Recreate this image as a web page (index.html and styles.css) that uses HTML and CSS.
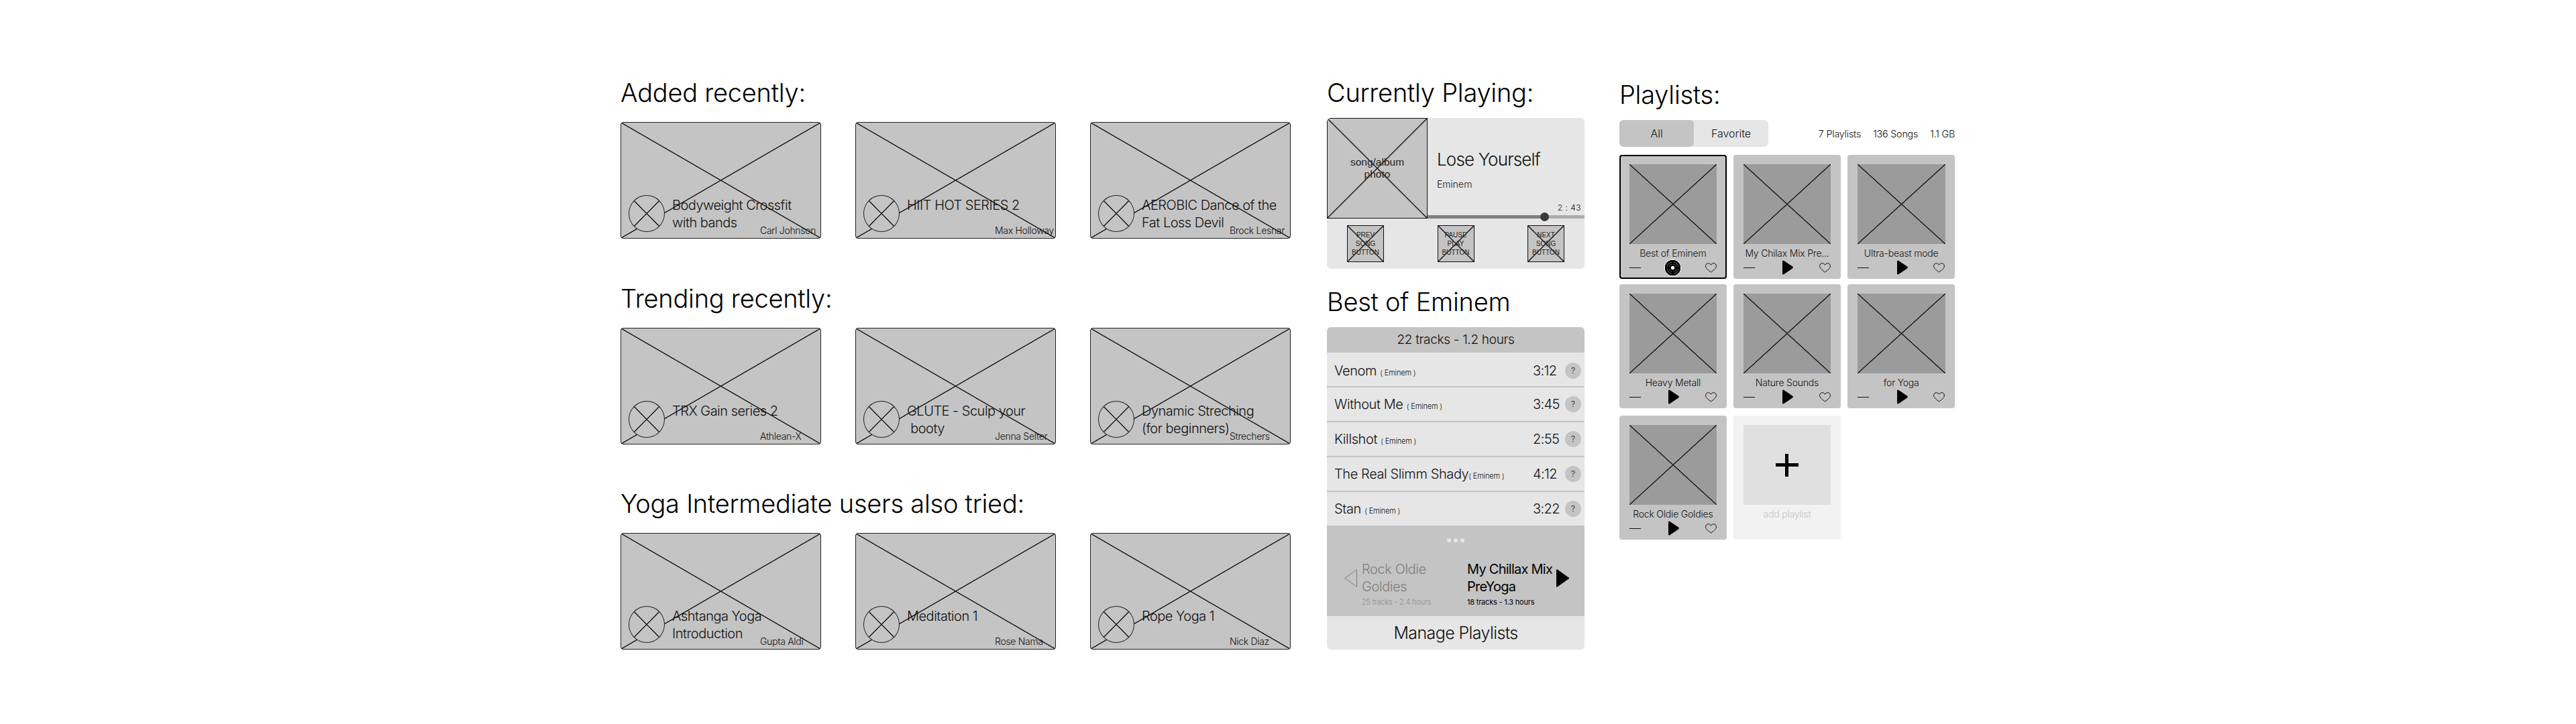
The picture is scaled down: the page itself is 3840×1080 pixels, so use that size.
FILE: index.html
```html
<!DOCTYPE html>
<html lang="en">
<head>
  <meta charset="UTF-8">
  <title>Workout Music</title>
  <link rel="stylesheet" href="styles.css">
</head>
<body>
  <svg class="sprite">
    <symbol id="play" viewBox="0 0 16 22"><path d="M2 .8 15 9.6 a1.6 1.6 0 0 1 0 2.8 L2 21.2 a1.3 1.3 0 0 1-2-1 V1.8 a1.3 1.3 0 0 1 2-1z" fill="#000"/></symbol>
    <symbol id="heart" viewBox="0 0 17 15"><path d="M8.5 14 C5 11.2 .6 8.6 .6 4.8 .6 2.4 2.4 .7 4.5 .7 6.2 .7 7.7 1.7 8.5 3.2 9.3 1.7 10.8 .7 12.5 .7 14.6 .7 16.4 2.4 16.4 4.8 16.4 8.6 12 11.2 8.5 14z" fill="none" stroke="#111" stroke-width="1"/></symbol>
  </svg>

  <main class="page">
    <div class="col-videos">
      <h2 class="heading">Added recently:</h2>
      <div class="video-row">
        <div class="video cross">
          <div class="avatar cross"></div>
          <div class="video-title">Bodyweight Crossfit<br>with bands</div>
          <div class="video-author">Carl Johnson</div>
        </div>
        <div class="video cross">
          <div class="avatar cross"></div>
          <div class="video-title">HIIT HOT SERIES 2</div>
          <div class="video-author">Max Holloway</div>
        </div>
        <div class="video cross">
          <div class="avatar cross"></div>
          <div class="video-title">AEROBIC Dance of the<br>Fat Loss Devil</div>
          <div class="video-author">Brock Lesnar</div>
        </div>
      </div>

      <h2 class="heading">Trending recently:</h2>
      <div class="video-row">
        <div class="video cross">
          <div class="avatar cross"></div>
          <div class="video-title">TRX Gain series 2</div>
          <div class="video-author">Athlean-X</div>
        </div>
        <div class="video cross">
          <div class="avatar cross"></div>
          <div class="video-title">GLUTE - Sculp your<br>&nbsp;booty</div>
          <div class="video-author">Jenna Selter</div>
        </div>
        <div class="video cross">
          <div class="avatar cross"></div>
          <div class="video-title">Dynamic Streching<br>(for beginners)</div>
          <div class="video-author">Strechers</div>
        </div>
      </div>

      <h2 class="heading">Yoga Intermediate users also tried:</h2>
      <div class="video-row">
        <div class="video cross">
          <div class="avatar cross"></div>
          <div class="video-title">Ashtanga Yoga<br>Introduction</div>
          <div class="video-author">Gupta Aldi</div>
        </div>
        <div class="video cross">
          <div class="avatar cross"></div>
          <div class="video-title">Meditation 1</div>
          <div class="video-author">Rose Nama</div>
        </div>
        <div class="video cross">
          <div class="avatar cross"></div>
          <div class="video-title">Rope Yoga 1</div>
          <div class="video-author">Nick Diaz</div>
        </div>
      </div>
    </div>

    <div class="col-player">
      <h2 class="heading">Currently Playing:</h2>
      <section class="player">
        <div class="now">
          <div class="album cross">song/album<br>photo</div>
          <div class="now-info">
            <div class="now-title">Lose Yourself</div>
            <div class="now-artist">Eminem</div>
            <div class="now-time">2 : 43</div>
            <div class="progress"><div class="progress-fill"></div><div class="progress-knob"></div></div>
          </div>
        </div>
        <div class="player-buttons">
          <div class="ctrl cross">PREV<br>SONG<br>BUTTON</div>
          <div class="ctrl cross">PAUSE<br>PLAY<br>BUTTON</div>
          <div class="ctrl cross">NEXT<br>SONG<br>BUTTON</div>
        </div>
      </section>

      <h2 class="heading heading-best">Best of Eminem</h2>
      <section class="tracks">
        <div class="tracks-head">22 tracks - 1.2 hours</div>
        <div class="track track-first"><span class="track-name">Venom <small>( Eminem )</small></span><span class="track-time">3:12</span><span class="track-help">?</span></div>
        <div class="track"><span class="track-name">Without Me <small>( Eminem )</small></span><span class="track-time">3:45</span><span class="track-help">?</span></div>
        <div class="track"><span class="track-name">Killshot <small>( Eminem )</small></span><span class="track-time">2:55</span><span class="track-help">?</span></div>
        <div class="track"><span class="track-name">The Real Slimm Shady<small>( Eminem )</small></span><span class="track-time">4:12</span><span class="track-help">?</span></div>
        <div class="track track-last"><span class="track-name">Stan <small>( Eminem )</small></span><span class="track-time">3:22</span><span class="track-help">?</span></div>
        <div class="switcher">
          <div class="dots"><i></i><i></i><i></i></div>
          <div class="switcher-row">
            <div class="mix mix-prev">
              <svg class="mix-arrow" viewBox="0 0 19 27"><path d="M18.5 .8 V26.2 L.8 13.5z" fill="none" stroke="#7f7f7f" stroke-width="1"/></svg>
              <div class="mix-text">
                <div class="mix-name">Rock Oldie<br>Goldies</div>
                <div class="mix-sub">25 tracks - 2.4 hours</div>
              </div>
            </div>
            <div class="mix mix-next">
              <div class="mix-text">
                <div class="mix-name">My Chillax Mix<br>PreYoga</div>
                <div class="mix-sub">18 tracks - 1.3 hours</div>
              </div>
              <svg class="mix-arrow" viewBox="0 0 19 27"><path d="M1.5 .5 18.3 12.5 a1 1 0 0 1 0 2 L1.5 26.5 a1 1 0 0 1-1.5-1 V1.5 a1 1 0 0 1 1.5-1z" fill="#000"/></svg>
            </div>
          </div>
        </div>
        <div class="manage">Manage Playlists</div>
      </section>
    </div>

    <div class="col-playlists">
      <h2 class="heading">Playlists:</h2>
      <div class="toolbar">
        <div class="tabs">
          <div class="tab tab-on">All</div>
          <div class="tab">Favorite</div>
        </div>
        <div class="stats"><span>7 Playlists</span><span>136 Songs</span><span>1.1 GB</span></div>
      </div>
      <div class="grid">
        <div class="pl pl-on">
          <div class="pl-thumb cross"></div>
          <div class="pl-name">Best of Eminem</div>
          <div class="pl-ctrls"><i class="minus"></i><span class="disc"></span><svg class="heart"><use href="#heart"/></svg></div>
        </div>
        <div class="pl">
          <div class="pl-thumb cross"></div>
          <div class="pl-name">My Chilax Mix Pre...</div>
          <div class="pl-ctrls"><i class="minus"></i><svg class="play"><use href="#play"/></svg><svg class="heart"><use href="#heart"/></svg></div>
        </div>
        <div class="pl">
          <div class="pl-thumb cross"></div>
          <div class="pl-name">Ultra-beast mode</div>
          <div class="pl-ctrls"><i class="minus"></i><svg class="play"><use href="#play"/></svg><svg class="heart"><use href="#heart"/></svg></div>
        </div>
        <div class="pl">
          <div class="pl-thumb cross"></div>
          <div class="pl-name">Heavy Metall</div>
          <div class="pl-ctrls"><i class="minus"></i><svg class="play"><use href="#play"/></svg><svg class="heart"><use href="#heart"/></svg></div>
        </div>
        <div class="pl">
          <div class="pl-thumb cross"></div>
          <div class="pl-name">Nature Sounds</div>
          <div class="pl-ctrls"><i class="minus"></i><svg class="play"><use href="#play"/></svg><svg class="heart"><use href="#heart"/></svg></div>
        </div>
        <div class="pl">
          <div class="pl-thumb cross"></div>
          <div class="pl-name">for Yoga</div>
          <div class="pl-ctrls"><i class="minus"></i><svg class="play"><use href="#play"/></svg><svg class="heart"><use href="#heart"/></svg></div>
        </div>
        <div class="pl pl-low">
          <div class="pl-thumb cross"></div>
          <div class="pl-name">Rock Oldie Goldies</div>
          <div class="pl-ctrls"><i class="minus"></i><svg class="play"><use href="#play"/></svg><svg class="heart"><use href="#heart"/></svg></div>
        </div>
        <div class="pl pl-low pl-add">
          <div class="pl-thumb add-thumb"><span class="plus"></span></div>
          <div class="pl-name">add playlist</div>
        </div>
      </div>
    </div>
  </main>
</body>
</html>
```

FILE: styles.css
```css
* {
  box-sizing: border-box;
}
body {
  margin: 0;
  background: white;
  color: #111;
  font-family: Inter, "Noto Sans", sans-serif;
  font-weight: 300;
}
.sprite {
  display: none;
}
.page {
  display: flex;
  height: 1080px;
  padding: 115px 0 0 925px;
}

/* placeholder box with the two wireframe diagonals */
.cross {
  background-color: #c4c4c4;
  background-image:
    linear-gradient(to top right, transparent calc(50% - 1px), #222 calc(50% - .5px), #222 calc(50% + .5px), transparent calc(50% + 1px)),
    linear-gradient(to bottom right, transparent calc(50% - 1px), #222 calc(50% - .5px), #222 calc(50% + .5px), transparent calc(50% + 1px));
}

.heading {
  margin: 0 0 21px;
  height: 46px;
  color: #000;
  font-size: 38px;
  line-height: 46px;
  font-weight: 300;
  letter-spacing: -.25px;
  white-space: nowrap;
}

/* left column */
.col-videos {
  width: 999px;
  margin-right: 54px;
}
.video-row {
  display: flex;
  gap: 51px;
  margin-bottom: 65.5px;
}
.video {
  display: grid;
  grid-template-columns: 55px 1fr;
  column-gap: 10px;
  width: 299.5px;
  height: 174px;
  padding: 108px 0 0 11px;
  border: 1px solid #222;
  border-radius: 4px;
}
.avatar {
  grid-row: 1;
  grid-column: 1;
  width: 54px;
  height: 55px;
  border: 1px solid #222;
  border-radius: 50%;
}
.video-title {
  grid-row: 1;
  grid-column: 2;
  margin-top: 2px;
  font-size: 20px;
  line-height: 26px;
  letter-spacing: -.5px;
  white-space: nowrap;
}
.video-author {
  grid-row: 1;
  grid-column: 2;
  align-self: start;
  margin: 43px 0 0 131px;
  font-size: 14px;
  line-height: 20px;
  letter-spacing: -.3px;
  white-space: nowrap;
}

/* middle column */
.col-player {
  width: 384px;
  margin-right: 52px;
}
.col-player .heading {
  margin-bottom: 15px;
}
.col-player .heading-best {
  margin-top: 26px;
}
.player {
  height: 225px;
  background: #e6e6e6;
  border-radius: 6px;
  overflow: hidden;
}
.now {
  display: flex;
  height: 150px;
}
.album {
  display: flex;
  align-items: center;
  justify-content: center;
  width: 150px;
  border: 1px solid #111;
  font: 15.5px/18px "Liberation Sans", Arial, sans-serif;
  text-align: center;
  color: #222;
}
.now-info {
  position: relative;
  flex: 1;
  padding: 47px 0 0 14px;
}
.now-title {
  font-size: 26px;
  line-height: 30px;
  letter-spacing: -.85px;
}
.now-artist {
  margin-top: 12px;
  font-size: 14px;
  line-height: 20px;
}
.now-time {
  position: absolute;
  right: 5px;
  top: 126px;
  font-size: 12px;
  line-height: 16px;
  letter-spacing: .5px;
}
.progress {
  position: absolute;
  left: 0;
  right: 0;
  bottom: 0;
  height: 5px;
  background: #adadad;
}
.progress-fill {
  width: 174px;
  height: 5px;
  background: #808080;
}
.progress-knob {
  position: absolute;
  left: 168px;
  top: -4px;
  width: 13px;
  height: 13px;
  border-radius: 50%;
  background: #3a3a3a;
}
.player-buttons {
  display: flex;
  justify-content: space-between;
  padding: 10px 30px;
}
.ctrl {
  display: flex;
  align-items: center;
  justify-content: center;
  width: 55px;
  height: 55px;
  border: 1px solid #111;
  font: 10px/13px "Liberation Sans", Arial, sans-serif;
  text-align: center;
  color: #222;
}

.tracks {
  background: #e6e6e6;
  border-radius: 6px;
  overflow: hidden;
}
.tracks-head {
  height: 38px;
  background: #c4c4c4;
  font-size: 19px;
  line-height: 38px;
  letter-spacing: -.3px;
  text-align: center;
}
.track {
  display: flex;
  align-items: center;
  height: 52px;
  padding: 0 5px 0 11px;
  border-bottom: 2px solid #c4c4c4;
}
.track-first {
  padding-top: 4px;
}
.track-last {
  height: 50px;
  border-bottom: 0;
}
.track-name {
  flex: 1;
  font-size: 20px;
  letter-spacing: -.4px;
  white-space: nowrap;
}
.track-name small {
  font-size: 11px;
  letter-spacing: -.2px;
}
.track-time {
  width: 48px;
  font-size: 20px;
  letter-spacing: -.6px;
}
.track-help {
  width: 24px;
  height: 24px;
  border-radius: 50%;
  background: #c4c4c4;
  font-size: 12px;
  line-height: 24px;
  text-align: center;
}
.switcher {
  height: 135px;
  padding: 19px 23px 0 26px;
  background: #c4c4c4;
}
.dots {
  display: flex;
  justify-content: center;
  gap: 4px;
  margin: 0 -23px 27px -26px;
}
.dots i {
  width: 6px;
  height: 6px;
  border-radius: 50%;
  background: #e6e6e6;
}
.switcher-row {
  display: flex;
}
.mix {
  display: flex;
}
.mix-prev {
  width: 183px;
  gap: 7px;
  color: #7f7f7f;
}
.mix-next {
  font-weight: 400;
  color: #000;
}
.mix-next .mix-text {
  width: 133px;
}
.mix-next .mix-name {
  letter-spacing: -.75px;
}
.mix-arrow {
  flex: none;
  width: 19px;
  height: 27px;
  margin-top: 13px;
}
.mix-name {
  font-size: 20px;
  line-height: 26px;
  letter-spacing: -.4px;
  white-space: nowrap;
}
.mix-sub {
  font-size: 11px;
  line-height: 20px;
  letter-spacing: -.2px;
  white-space: nowrap;
}
.mix-prev .mix-sub {
  color: #8f8f8f;
}
.manage {
  height: 50px;
  font-size: 25px;
  line-height: 50px;
  letter-spacing: -.6px;
  text-align: center;
}

/* right column */
.col-playlists {
  width: 500px;
  padding-top: 3px;
}
.col-playlists .heading {
  margin-bottom: 15px;
}
.toolbar {
  display: flex;
  justify-content: space-between;
  align-items: center;
  height: 40px;
  margin-bottom: 12px;
}
.tabs {
  display: flex;
  width: 222px;
  height: 40px;
  background: #e6e6e6;
  border-radius: 6px;
}
.tab {
  flex: 1;
  border-radius: 6px;
  font-size: 16px;
  line-height: 40px;
  text-align: center;
}
.tab-on {
  background: #c4c4c4;
}
.stats {
  display: flex;
  gap: 18px;
  font-size: 14.3px;
  letter-spacing: -.2px;
}
.grid {
  display: grid;
  grid-template-columns: repeat(3, 1fr);
  column-gap: 10.5px;
  row-gap: 8px;
}
.pl {
  height: 185px;
  padding: 14px 14.5px 0;
  background: #c4c4c4;
  border-radius: 4px;
}
.pl-on {
  box-shadow: inset 0 0 0 2px #000;
}
.pl-low {
  margin-top: 3px;
}
.pl-thumb {
  height: 119px;
  background-color: #9b9b9b;
}
.pl-name {
  margin-top: 4px;
  font-size: 14px;
  line-height: 20px;
  letter-spacing: -.2px;
  text-align: center;
  white-space: nowrap;
}
.pl-ctrls {
  display: flex;
  justify-content: space-between;
  align-items: center;
  height: 20px;
  margin-top: 1px;
}
.minus {
  width: 17px;
  height: 1px;
  background: #111;
}
.play {
  width: 16px;
  height: 22px;
  margin-left: 3px;
}
.heart {
  width: 17px;
  height: 15px;
}
.disc {
  width: 25px;
  height: 25px;
  border-radius: 50%;
  background: radial-gradient(circle, #fff 0 2.5px, #000 3px 5px, #999 5.5px, #000 6px 8px, #999 8.5px, #000 9px 11.5px, #fff 12px);
}
.pl-add {
  background: #f2f2f2;
  color: #c4c4c4;
}
.add-thumb {
  display: flex;
  align-items: center;
  justify-content: center;
  background: #e0e0e0;
}
.plus {
  width: 34px;
  height: 34px;
  background:
    linear-gradient(#000, #000) center / 34px 5px no-repeat,
    linear-gradient(#000, #000) center / 5px 34px no-repeat;
}
```
